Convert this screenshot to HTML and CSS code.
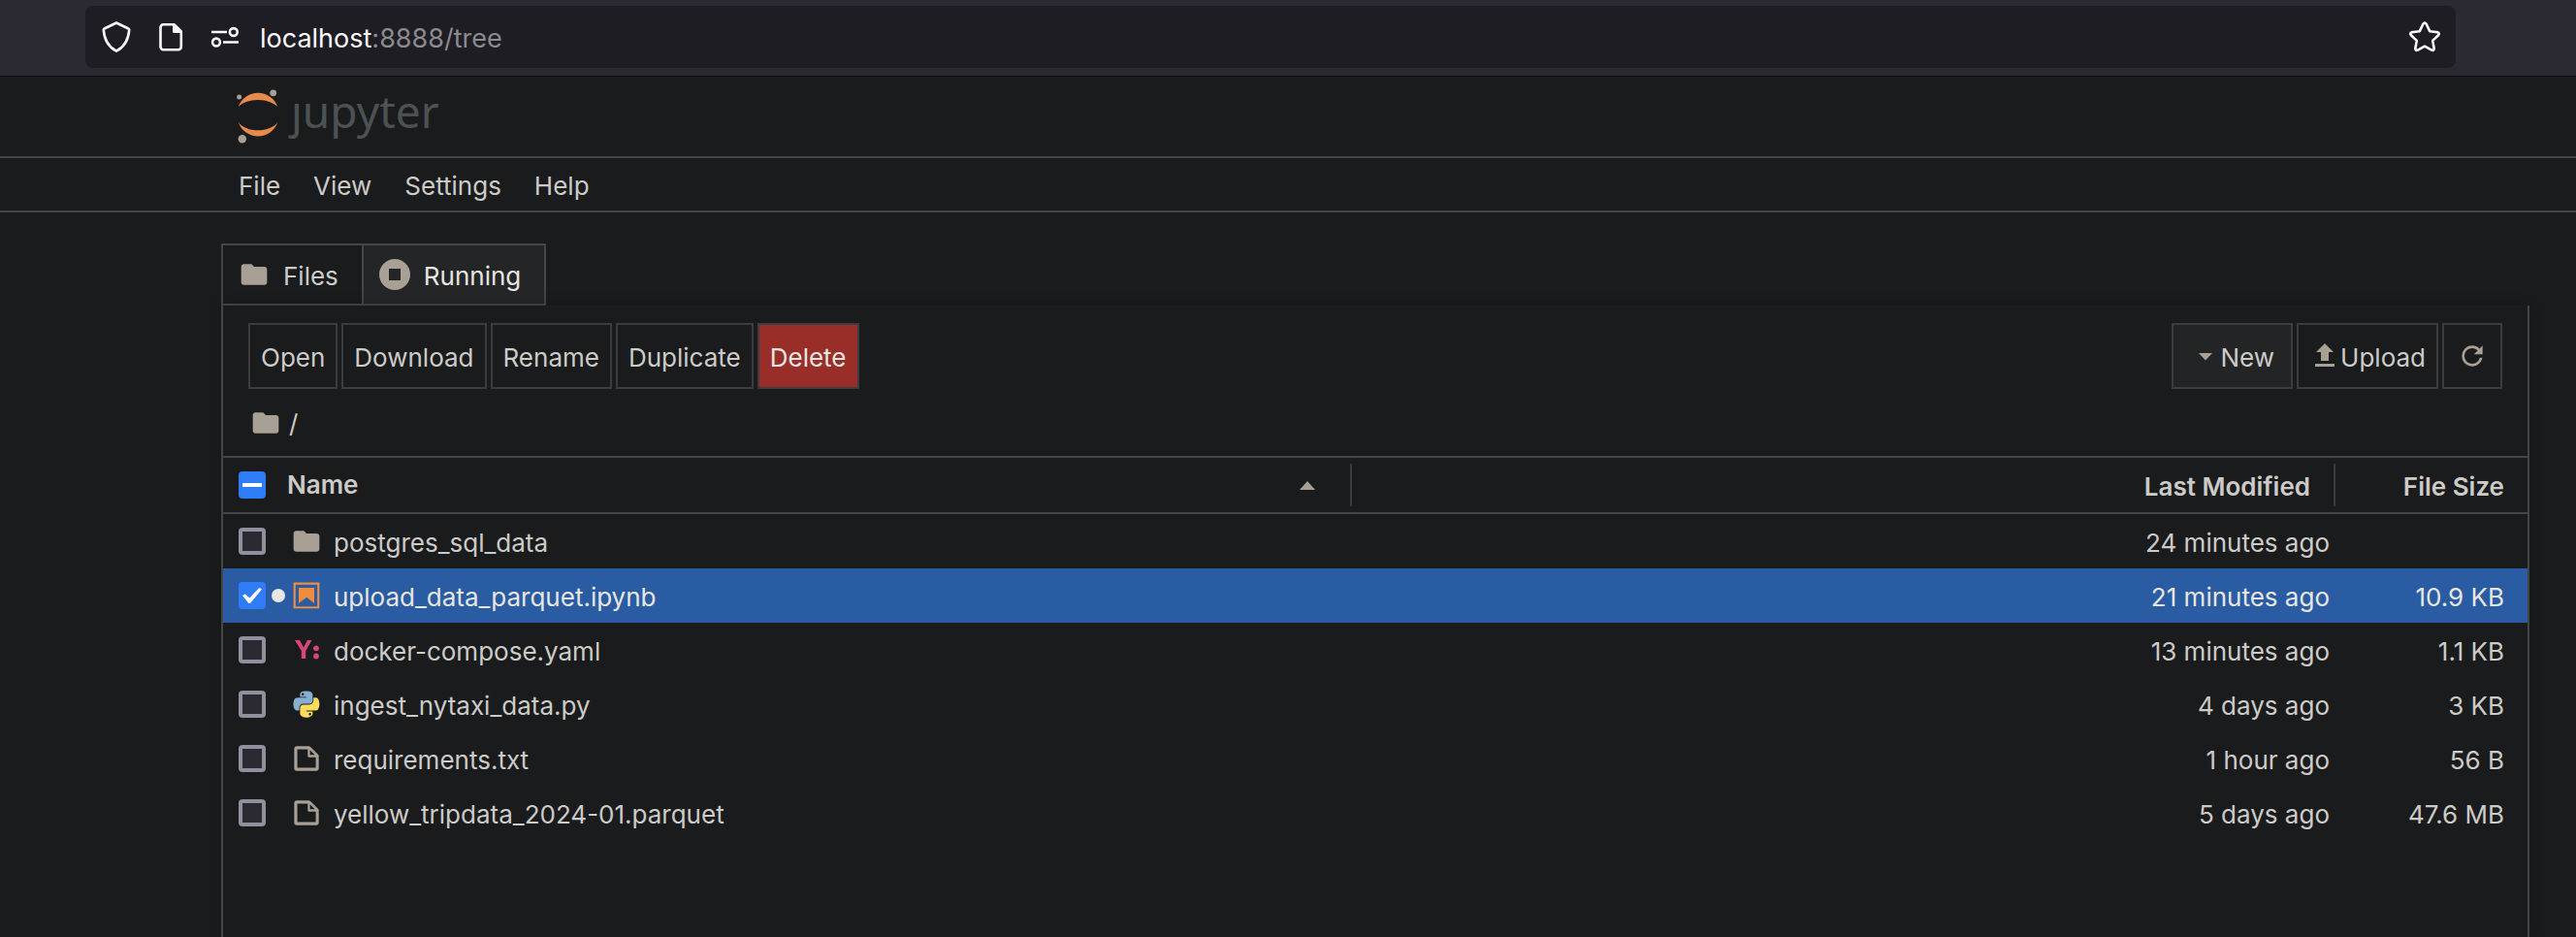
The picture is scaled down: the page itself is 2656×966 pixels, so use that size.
FILE: index.html
```html
<!DOCTYPE html>
<html lang="en">
<head>
<meta charset="utf-8">
<title>Home</title>
<link rel="stylesheet" href="styles.css">
</head>
<body>
<svg class="defs" aria-hidden="true">
  <symbol id="folder" viewBox="0 0 24 24"><path d="M10 4H4c-1.100 0-1.990.9-1.990 2L2 18c0 1.100.9 2 2 2h16c1.100 0 2-.9 2-2V8c0-1.100-.9-2-2-2h-8l-2-2z"/></symbol>
  <symbol id="file" viewBox="0 0 22 22"><path d="M19.300 8.200l-5.500-5.500c-.3-.3-.7-.5-1.200-.5H3.900c-.8.1-1.600.9-1.600 1.800v14.100c0 .9.7 1.600 1.600 1.600h14.200c.9 0 1.600-.7 1.600-1.600V9.400c.1-.5-.1-.9-.4-1.200zm-5.800-3.300l3.400 3.600h-3.400V4.900zm3.900 12.700H4.700c-.1 0-.2 0-.2-.2V4.700c0-.2.1-.3.200-.3h7.200v4.400s0 .8.3 1.100c.3.3 1.100.3 1.100.3h4.300v7.200s-.1.200-.2.200z"/></symbol>
</svg>

<header class="browser">
  <div class="urlbar">
    <svg class="url-icon" viewBox="0 0 32 32"><path d="M16 1.500L28.300 7.500q.9.4.9 1.300C28.500 19 24.500 26 16 30.700 7.500 26 3.500 19 2.800 8.800Q2.800 7.900 3.700 7.500z"/></svg>
    <svg class="url-icon" viewBox="0 0 32 32"><path d="M8.500 3.200H19.500l7.300 7.300v15.800a3 3 0 0 1-3 3H8.500a3 3 0 0 1-3-3V6.200a3 3 0 0 1 3-3z"/><path class="solid" d="M18 3v7.500a1.500 1.500 0 0 0 1.500 1.500h8z"/></svg>
    <svg class="url-icon site" viewBox="0 0 32 32"><path d="M2 11h16M14 21.500h16"/><circle cx="24.800" cy="11" r="3.900"/><circle cx="7" cy="21.500" r="3.900"/></svg>
    <span class="url label"><span class="host">localhost</span>:8888/tree</span>
    <button class="star" aria-label="Bookmark this page"><svg class="url-icon" viewBox="0 0 32 32"><path d="M14.300 2.800q1.700-2.600 3.400 0l3.500 7.500 8 1q2.600.7.900 3l-5.900 5.600 1.500 8q.1 2.600-2.600 1.700L16 25.700l-7.100 3.900q-2.700.9-2.600-1.700l1.500-8-5.900-5.600q-1.700-2.300.9-3l8-1z"/></svg></button>
  </div>
</header>

<div class="brand">
  <svg class="logo" viewBox="0 0 44 58"><g class="orange"><path d="M22 42.300c-9 0-16.900-3.300-20.300-8.300a21.500 21.500 0 0 0 40.600 0C38.900 39 31 42.300 22 42.300z"/><path d="M22 10.900c9 0 16.900 3.300 20.300 7.300a21.500 21.500 0 0 0-40.600 0C5.100 14.200 13 10.900 22 10.900z"/></g><g class="dots"><circle cx="37.700" cy="3.800" r="3.400"/><circle cx="5.800" cy="51.200" r="4.200"/><circle cx="2.600" cy="8.100" r="2.500"/></g></svg>
  <span class="wordmark">ȷupyter</span>
</div>

<nav class="menubar">
  <button>File</button><button>View</button><button>Settings</button><button>Help</button>
</nav>

<main class="main">
  <div class="tabs" role="tablist">
    <button class="tab" role="tab" aria-selected="true"><svg class="icon" viewBox="0 0 24 24"><use href="#folder"/></svg><span class="label">Files</span></button>
    <button class="tab running" role="tab" aria-selected="false"><svg class="icon" viewBox="0 0 24 24"><path fill-rule="evenodd" d="M12 0a12 12 0 1 0 0 24 12 12 0 0 0 0-24zM7.500 7.500h9v9h-9z"/></svg><span class="label">Running</span></button>
  </div>
  <section class="panel">
    <div class="toolbar">
      <button class="btn"><span class="label">Open</span></button>
      <button class="btn"><span class="label">Download</span></button>
      <button class="btn"><span class="label">Rename</span></button>
      <button class="btn"><span class="label">Duplicate</span></button>
      <button class="btn danger"><span class="label">Delete</span></button>
      <span class="spacer"></span>
      <button class="btn new"><svg class="icon" viewBox="0 0 32 32"><path d="M9 13h14l-7 7.500z"/></svg><span class="label">New</span></button>
      <button class="btn upload"><svg class="icon" viewBox="0 0 32 32"><path d="M12 21h8v-9h5L16 3l-9 9h5zM6 24h20v3H6z"/></svg><span class="label">Upload</span></button>
      <button class="btn refresh" aria-label="Refresh"><svg class="icon" viewBox="0 0 18 18"><path d="M9 13.500c-2.490 0-4.500-2.010-4.500-4.500S6.510 4.500 9 4.500c1.240 0 2.360.52 3.170 1.330L10 8h5V3l-1.760 1.760C12.150 3.680 10.660 3 9 3 5.690 3 3.010 5.690 3.010 9S5.690 15 9 15c2.970 0 5.430-2.160 5.900-5h-1.520c-.46 2-2.240 3.500-4.380 3.500z"/></svg></button>
    </div>
    <div class="crumbs"><svg class="icon" viewBox="0 0 24 24"><use href="#folder"/></svg><span class="label">/</span></div>
    <table class="files">
      <thead>
        <tr>
          <th class="name"><div class="cell"><input type="checkbox" class="check mixed" aria-label="Select all files"><span class="title">Name</span><svg class="sort" viewBox="0 0 16 9"><path d="M0 9L8 0l8 9z"/></svg></div></th>
          <th class="modified"><div class="cell"><span class="label">Last Modified</span></div></th>
          <th class="size"><div class="cell"><span class="label">File Size</span></div></th>
        </tr>
      </thead>
      <tbody>
        <tr>
          <td><label class="cell"><input type="checkbox" class="check"><span class="dot"></span><svg class="icon" viewBox="0 0 24 24"><use href="#folder"/></svg><span class="label">postgres_sql_data</span></label></td>
          <td>24 minutes ago</td><td></td>
        </tr>
        <tr class="selected">
          <td><label class="cell"><input type="checkbox" class="check" checked><span class="dot on"></span><svg class="icon nb" viewBox="0 0 22 22"><path d="M18.700 3.300v15.400H3.300V3.300h15.400m1.500-1.500H1.800v18.300h18.300l.1-18.300z"/><path d="M16.500 16.500l-5.400-4.300-5.600 4.300v-11h11z"/></svg><span class="label">upload_data_parquet.ipynb</span></label></td>
          <td>21 minutes ago</td><td>10.9 KB</td>
        </tr>
        <tr>
          <td><label class="cell"><input type="checkbox" class="check"><span class="dot"></span><svg class="icon yaml" viewBox="-2 -1 32 32"><path d="M2 5h5l4 7.500L15 5h4.500l-6.300 11v8H8.800v-8z"/><circle cx="24" cy="13.300" r="2.900"/><circle cx="24" cy="21.500" r="2.900"/></svg><span class="label">docker-compose.yaml</span></label></td>
          <td>13 minutes ago</td><td>1.1 KB</td>
        </tr>
        <tr>
          <td><label class="cell"><input type="checkbox" class="check"><span class="dot"></span><svg class="icon" viewBox="-10 -10 132 132"><path class="py-blue" d="M54.919 0c-4.584.022-8.961.413-12.813 1.095C30.760 3.099 28.700 7.295 28.700 15.032v10.219h26.813v3.406H18.638c-7.793 0-14.616 4.684-16.750 13.594-2.462 10.213-2.571 16.586 0 27.250 1.906 7.938 6.458 13.594 14.250 13.594h9.219v-12.250c0-8.850 7.657-16.656 16.750-16.656h26.781c7.455 0 13.406-6.138 13.406-13.625v-25.531c0-7.266-6.130-12.725-13.406-13.937C64.282.328 59.502-.02 54.919 0zm-14.500 8.220c2.770 0 5.031 2.298 5.031 5.125 0 2.816-2.262 5.094-5.031 5.094-2.779 0-5.031-2.277-5.031-5.094 0-2.827 2.252-5.125 5.031-5.125z"/><path class="py-yellow" d="M85.638 28.657v11.906c0 9.231-7.826 17-16.750 17H42.106c-7.336 0-13.406 6.278-13.406 13.625v25.532c0 7.266 6.319 11.540 13.406 13.625 8.488 2.495 16.627 2.946 26.781 0 6.750-1.954 13.406-5.888 13.406-13.625V86.501H55.513v-3.406H95.700c7.793 0 10.696-5.436 13.406-13.594 2.800-8.399 2.680-16.476 0-27.250-1.926-7.757-5.604-13.594-13.406-13.594zM70.575 93.313c2.779 0 5.031 2.278 5.031 5.094 0 2.827-2.252 5.125-5.031 5.125-2.770 0-5.031-2.297-5.031-5.125 0-2.816 2.261-5.094 5.031-5.094z"/></svg><span class="label">ingest_nytaxi_data.py</span></label></td>
          <td>4 days ago</td><td>3 KB</td>
        </tr>
        <tr>
          <td><label class="cell"><input type="checkbox" class="check"><span class="dot"></span><svg class="icon" viewBox="0 0 22 22"><use href="#file"/></svg><span class="label">requirements.txt</span></label></td>
          <td>1 hour ago</td><td>56 B</td>
        </tr>
        <tr>
          <td><label class="cell"><input type="checkbox" class="check"><span class="dot"></span><svg class="icon" viewBox="0 0 22 22"><use href="#file"/></svg><span class="label">yellow_tripdata_2024-01.parquet</span></label></td>
          <td>5 days ago</td><td>47.6 MB</td>
        </tr>
      </tbody>
    </table>
  </section>
</main>
</body>
</html>
```
FILE: styles.css
```css
* { box-sizing: border-box; }
html, body { height: 100%; }
body {
  margin: 0;
  display: flex;
  flex-direction: column;
  background: #1a1b1d;
  color: #cdcbc7;
  font: 26px/32px Inter, "Liberation Sans", sans-serif;
}
button {
  margin: 0;
  border: 0;
  padding: 0;
  background: none;
  color: inherit;
  font: inherit;
}
.defs { position: absolute; width: 0; height: 0; }
svg { display: block; flex: none; }
.label { padding-top: 3px; }

.browser {
  padding: 6px 124px 8px 88px;
  background: #2b2a33;
  border-bottom: 1px solid #0c0c0d;
}
.urlbar {
  display: flex;
  align-items: center;
  height: 64px;
  padding: 0 16px;
  border-radius: 8px;
  background: #1e1d23;
}
.url-icon {
  width: 32px;
  height: 32px;
  margin-right: 24px;
  fill: none;
  stroke: #fbfbfe;
  stroke-width: 2.6;
  stroke-linejoin: round;
}
.url-icon .solid { fill: #fbfbfe; stroke: none; }
.site { margin-right: 20px; }
.url { flex: 1; color: #8b8b90; font-size: 27px; }
.host { color: #fbfbfe; }
.star .url-icon { margin: 0; }

.brand {
  display: flex;
  align-items: center;
  height: 84px;
  padding: 2px 0 0 244px;
  border-bottom: 2px solid #434547;
}
.logo { width: 44px; height: 58px; }
.orange { fill: #e78a4b; }
.dots { fill: #a8a095; }
.wordmark {
  margin-left: 12px;
  padding-bottom: 14px;
  color: #4b5253;
  font: 46px/60px "Noto Sans", sans-serif;
}

.menubar {
  display: flex;
  height: 56px;
  padding-left: 229px;
  border-bottom: 2px solid #434547;
}
.menubar button { padding: 3px 17px 0; }

.main {
  flex: 1;
  display: flex;
  flex-direction: column;
  padding: 32px 48px 0 228px;
}
.tabs { display: flex; }
.tab {
  display: flex;
  align-items: center;
  gap: 14px;
  height: 64px;
  padding: 0 24px 0 16px;
  border: 2px solid #434547;
  color: #cdcbc7;
}
.tab + .tab { margin-left: -2px; }
.running { background: #242527; color: #e8e6e3; }
.icon { width: 32px; height: 32px; fill: #a8a095; }

.panel {
  flex: 1;
  border: solid #434547;
  border-width: 0 2px;
  box-shadow: 0 0 12px rgba(0, 0, 0, .2);
}
.toolbar { display: flex; gap: 4px; padding: 18px 26px 0; }
.spacer { flex: 1; }
.btn {
  display: flex;
  align-items: center;
  height: 68px;
  padding: 0 11px;
  border: 2px solid #3b3c3e;
}
.danger { background: #992e29; color: #e8e6e3; }
.new { padding: 0 17px; background: #232426; }
.refresh { padding: 0 13px; }
.crumbs { display: flex; align-items: center; gap: 8px; height: 69px; padding-left: 28px; }

.files { width: 100%; table-layout: fixed; border-spacing: 0; }
.files th, .files td { padding: 0; text-align: right; }
.files th { font-weight: 600; border: solid #434547; border-width: 2px 0; }
.name { width: 49%; }
.size { width: 198px; }
.files td { height: 56px; }
.files .cell { display: flex; align-items: center; }
th .cell { height: 44px; margin: 6px 0; padding-right: 24px; justify-content: flex-end; border-right: 2px solid #3b3c3e; }
.files .name .cell { justify-content: flex-start; padding: 0 36px 0 16px; }
.files .size .cell { border: 0; }
.title { flex: 1; margin-left: 22px; text-align: left; }
.sort { width: 16px; height: 9px; fill: #a8a095; }
td .cell { padding-left: 16px; }
td .icon { margin-right: 12px; }
.files td + td { padding: 3px 6px 0 0; }
.files td:last-child { padding-right: 24px; }
.selected { background: #295ca2; color: #e8e6e3; }
td .nb { fill: #f08c3e; }
td .yaml { fill: #d8457a; }
.py-blue { fill: #86afd3; }
.py-yellow { fill: #ffdc5c; }
.dot { width: 14px; height: 14px; margin: 0 6px; border-radius: 50%; }
.dot.on { background: #e8e6e3; }

.check {
  appearance: none;
  flex: none;
  width: 28px;
  height: 28px;
  margin: 0;
  border: 4px solid #8f8f9d;
  border-radius: 4px;
  background: #2b2a33;
}
.check:checked, .mixed { display: grid; place-items: center; border: 0; background: #2f7df6; }
.mixed::before { content: ""; width: 20px; height: 4px; background: #fff; }
.check:checked::before {
  content: "";
  width: 20px;
  height: 16px;
  background: #fff;
  clip-path: polygon(0 50%, 14% 40%, 37% 66%, 86% 0, 100% 10%, 40% 100%, 32% 100%);
}
```
